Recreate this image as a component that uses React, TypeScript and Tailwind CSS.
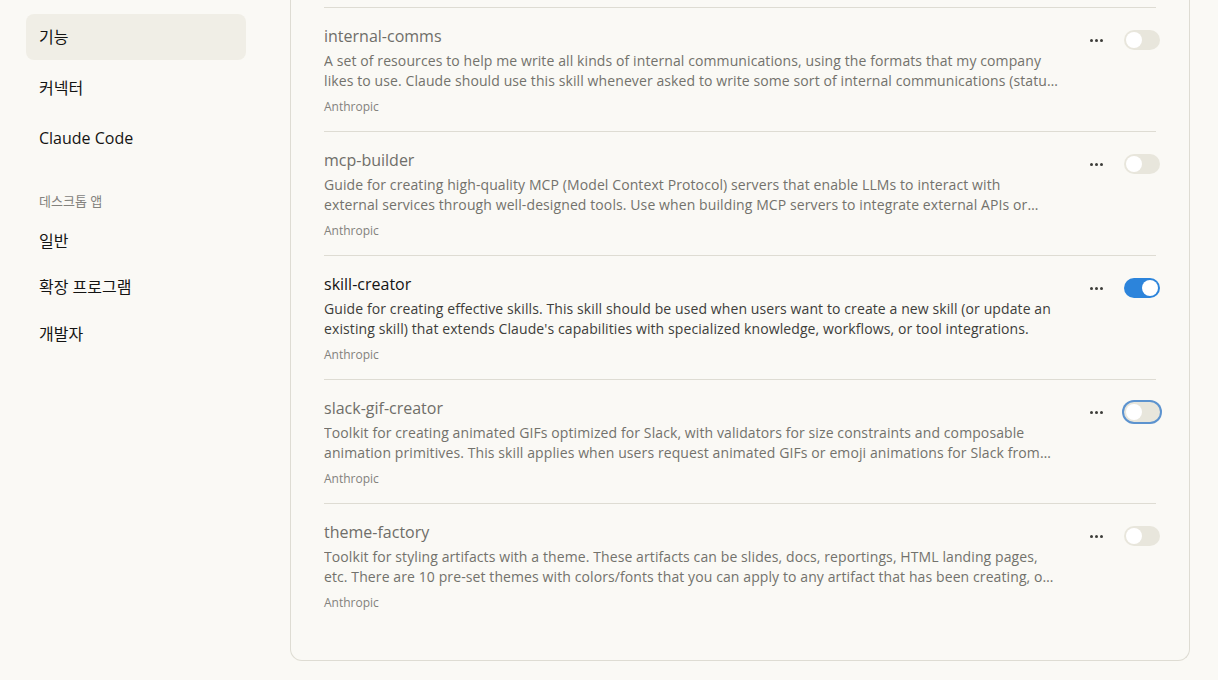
import React, { useState } from "react";

type Skill = {
  name: string;
  description: string;
  author: string;
  enabled: boolean;
  focused?: boolean;
};

const skills: Skill[] = [
  {
    name: "internal-comms",
    description:
      "A set of resources to help me write all kinds of internal communications, using the formats that my company likes to use. Claude should use this skill whenever asked to write some sort of internal communications (status reports, leadership updates, 3P updates, company newsletters, FAQs, incident reports, project updates, etc.).",
    author: "Anthropic",
    enabled: false,
  },
  {
    name: "mcp-builder",
    description:
      "Guide for creating high-quality MCP (Model Context Protocol) servers that enable LLMs to interact with external services through well-designed tools. Use when building MCP servers to integrate external APIs or services, whether in Python (FastMCP) or Node/TypeScript (MCP SDK).",
    author: "Anthropic",
    enabled: false,
  },
  {
    name: "skill-creator",
    description:
      "Guide for creating effective skills. This skill should be used when users want to create a new skill (or update an existing skill) that extends Claude's capabilities with specialized knowledge, workflows, or tool integrations.",
    author: "Anthropic",
    enabled: true,
  },
  {
    name: "slack-gif-creator",
    description:
      "Toolkit for creating animated GIFs optimized for Slack, with validators for size constraints and composable animation primitives. This skill applies when users request animated GIFs or emoji animations for Slack from descriptions like \"make me a GIF for Slack of X doing Y\".",
    author: "Anthropic",
    enabled: false,
    focused: true,
  },
  {
    name: "theme-factory",
    description:
      "Toolkit for styling artifacts with a theme. These artifacts can be slides, docs, reportings, HTML landing pages, etc. There are 10 pre-set themes with colors/fonts that you can apply to any artifact that has been creating, or can generate a new theme on-the-fly.",
    author: "Anthropic",
    enabled: false,
  },
];

const font = {
  fontFamily: '"Open Sans", "Noto Sans CJK KR", sans-serif',
};

const Toggle = ({ on, focused }: { on: boolean; focused?: boolean }) => (
  <div
    className={`relative h-5 w-9 shrink-0 rounded-full ${
      on ? "bg-[#2c84db]" : "bg-[#e8e6dc]"
    } ${focused ? "ring-2 ring-[#5c93cf]" : ""}`}
  >
    <div
      className={`absolute top-0.5 h-4 w-4 rounded-full bg-white ${
        on ? "left-[18px]" : "left-0.5"
      }`}
    />
  </div>
);

const Dots = () => (
  <div className="flex items-center gap-[2px]">
    <span className="h-[3px] w-[3px] rounded-full bg-[#3d3d3a]" />
    <span className="h-[3px] w-[3px] rounded-full bg-[#3d3d3a]" />
    <span className="h-[3px] w-[3px] rounded-full bg-[#3d3d3a]" />
  </div>
);

const SkillRow = ({ skill }: { skill: Skill }) => (
  <div className="flex border-t border-[#dedcd3] pt-4 pb-[16px]">
    <div className="min-w-0 w-[734px]">
      <div
        className={`text-[16px] leading-6 ${
          skill.enabled ? "text-[#141413]" : "text-[#6f6e69]"
        }`}
      >
        {skill.name}
      </div>
      <p
        className={`mt-[3px] line-clamp-2 text-[14px] leading-5 tracking-[0.1px] ${
          skill.enabled ? "text-[#3d3d3a]" : "text-[#73726c]"
        }`}
      >
        {skill.description}
      </p>
      <div className="mt-[8px] text-[12px] leading-4 text-[#83827d]">
        {skill.author}
      </div>
    </div>
    <div className="ml-auto mr-[-4px] mt-[6px] flex h-5 items-center gap-[21px]">
      <Dots />
      <Toggle on={skill.enabled} focused={skill.focused} />
    </div>
  </div>
);

const navTop = ["기능", "커넥터", "Claude Code"];
const navDesktop = ["일반", "확장 프로그램", "개발자"];

export default function App() {
  const [active] = useState("기능");

  return (
    <div
      className="flex h-[680px] w-full overflow-hidden bg-[#faf9f5] text-[#141413]"
      style={font}
    >
      <aside className="w-[290px] shrink-0 pl-[26px] pt-[14px]">
        <nav className="flex w-[220px] flex-col gap-[4.5px]">
          {navTop.map((item) => (
            <div
              key={item}
              className={`flex h-[46px] items-center rounded-lg px-[13px] text-[16px] ${
                active === item ? "bg-[#f0eee6]" : ""
              }`}
            >
              {item}
            </div>
          ))}
        </nav>
        <div className="mt-[31px] px-[13px] text-[13px] text-[#83827d]">
          데스크톱 앱
        </div>
        <nav className="mt-[6px] flex w-[220px] flex-col">
          {navDesktop.map((item) => (
            <div
              key={item}
              className="flex h-[46.5px] items-center rounded-lg px-[13px] text-[16px]"
            >
              {item}
            </div>
          ))}
        </nav>
      </aside>

      <main className="w-[900px] shrink-0">
        <div className="rounded-b-xl border-x border-b border-[#dedcd3] px-[33px] pt-[7px] pb-[33px]">
          {skills.map((skill) => (
            <SkillRow key={skill.name} skill={skill} />
          ))}
        </div>
      </main>
    </div>
  );
}
